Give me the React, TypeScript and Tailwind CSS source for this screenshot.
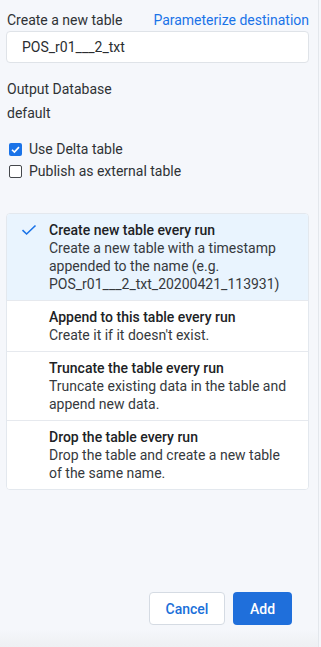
import React from "react";

const options = [
  {
    title: "Create new table every run",
    desc: "Create a new table with a timestamp appended to the name (e.g. POS_r01___2_txt_20200421_113931)",
    selected: true,
  },
  { title: "Append to this table every run", desc: "Create it if it doesn't exist." },
  { title: "Truncate the table every run", desc: "Truncate existing data in the table and append new data." },
  { title: "Drop the table every run", desc: "Drop the table and create a new table of the same name." },
];

export default function App() {
  return (
    <div
      className="w-[321px] h-[647px] bg-[#f5f7fb] text-[14px] leading-[18px] text-[#2f3235] flex"
      style={{ fontFamily: "Roboto, 'Liberation Sans', sans-serif" }}
    >
      <div className="w-[319px] h-full border-r border-[#e3e7ec] relative flex flex-col pl-[6px] pr-[9px] pt-[11px]">
        <div className="flex justify-between items-center h-[18px]">
          <span className="pl-[1px]">Create a new table</span>
          <span className="text-[#1a73e8]">Parameterize destination</span>
        </div>
        <div className="mt-[2px] h-[32px] bg-white border border-[#dfe3e8] rounded-[4px] flex items-center pl-[15px] text-[#2a2d30]">
          POS_r01___2_txt
        </div>
        <div className="mt-[17px] pl-[1px]">Output Database</div>
        <div className="mt-[6px] pl-[1px]">default</div>
        <div className="mt-[16px] flex flex-col">
          <div className="h-[22px] flex items-center">
            <span className="ml-[3px] w-[13px] h-[13px] rounded-[2px] bg-[#1a73e8] flex items-center justify-center">
              <svg width="11" height="11" viewBox="0 0 12 12">
                <path d="M2.2 6.3 L4.8 8.8 L9.8 3.4" fill="none" stroke="white" strokeWidth="1.8" />
              </svg>
            </span>
            <span className="ml-[7px]">Use Delta table</span>
          </div>
          <div className="h-[22px] flex items-center">
            <span className="ml-[3px] w-[13px] h-[13px] rounded-[2px] border-[1.5px] border-[#45484c] bg-white" />
            <span className="ml-[7px]">Publish as external table</span>
          </div>
        </div>
        <div className="mt-[31px] border border-[#e3e8ee] rounded-[4px] overflow-hidden bg-white">
          {options.map((o, i) => (
            <div
              key={i}
              className={
                "flex py-[7px] pr-[20px] " +
                (i > 0 ? "border-t border-[#e6e9ee] " : "") +
                (o.selected ? "bg-[#e9f4fe]" : "bg-white")
              }
            >
              <div className="w-[42px] shrink-0 flex justify-center pt-[3px]">
                {o.selected && (
                  <svg width="16" height="12" viewBox="0 0 16 12" className="ml-[2px]">
                    <path d="M1.5 6.2 L5.6 10 L14.5 1.5" fill="none" stroke="#1a73e8" strokeWidth="1.6" />
                  </svg>
                )}
              </div>
              <div className="flex flex-col">
                <div className="font-medium text-[#202225]">{o.title}</div>
                <div className="text-[#36393d]">{o.desc}</div>
              </div>
            </div>
          ))}
        </div>
        <div className="mt-[102px] flex justify-end gap-[8px] pr-[17px]">
          <button className="w-[76px] h-[33px] bg-white border border-[#d5dbe3] rounded-[4px] text-[#1a6fd9] font-medium">
            Cancel
          </button>
          <button className="w-[59px] h-[33px] bg-[#1f6fdb] rounded-[4px] text-white font-medium">Add</button>
        </div>
        <div className="absolute left-0 right-0 bottom-0 h-[18px] bg-gradient-to-b from-[#f5f7fb] to-[#eef0f3]" />
      </div>
    </div>
  );
}
